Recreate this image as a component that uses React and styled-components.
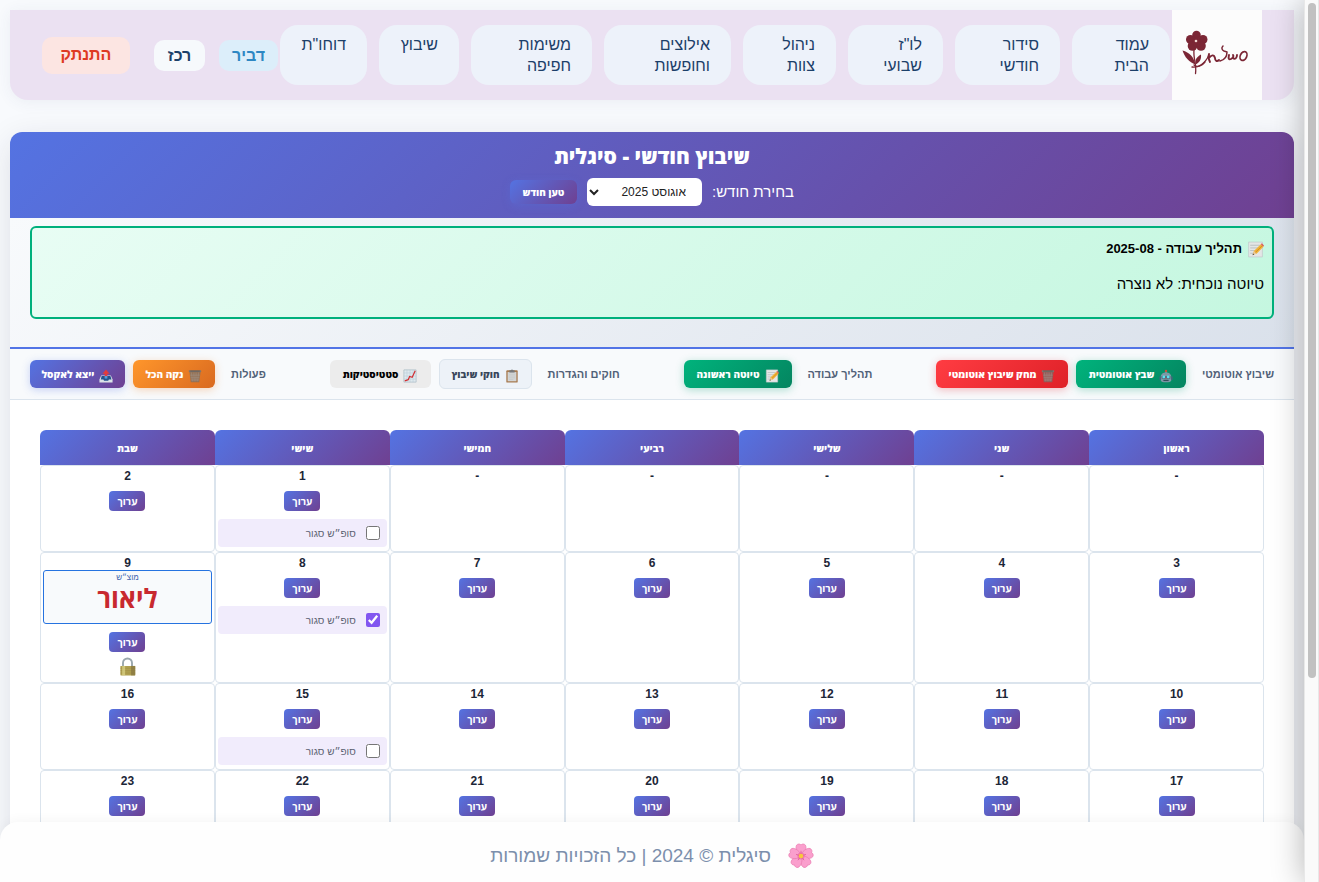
import React from "react";
import styled, { createGlobalStyle, css } from "styled-components";

const brand = "linear-gradient(135deg, #5473e2 0%, #6f4091 100%)";
const line = "#dbe4ed";
const heavyFont = `"Open Sans", "Liberation Sans", Arial, sans-serif`;

const GlobalStyle = createGlobalStyle`
  *, *::before, *::after { box-sizing: border-box; }
  body { margin: 0; background: #f8fafd; font-family: "Liberation Sans", Arial, sans-serif; color: #000; }
  button, select, input { font-family: inherit; margin: 0; }
  h1, h2, p { margin: 0; }
`;

const Shell = styled.div`
  display: flex;
  height: 100vh;
  overflow: hidden;
`;
const Viewport = styled.div`
  position: relative;
  flex: 1;
  min-width: 0;
  overflow: hidden;
  padding: 10px 10px 0;
`;
const ScrollTrack = styled.div`
  width: 15px;
  padding: 3px 3px;
  background: #fafafa;
  border: solid #e8e8e8;
  border-width: 0 1px;
`;
const ScrollThumb = styled.div`
  width: 8px;
  height: 77%;
  border-radius: 4px;
  background: #c1c1c1;
`;
const Drawer = styled.aside`
  position: absolute;
  top: 0;
  left: 100%;
  width: 100px;
  height: 100%;
  box-shadow: 0 0 30px rgba(0, 0, 0, 0.3);
`;

const TopBar = styled.header`
  display: flex;
  align-items: center;
  height: 90px;
  padding: 0 32px;
  margin-bottom: 32px;
  background: #ebe1f2;
  border-radius: 0 0 18px 18px;
  box-shadow: 0 2px 16px rgba(60, 70, 110, 0.07);
`;
const LogoBox = styled.a`
  display: block;
  width: 90px;
  height: 90px;
  background: #fcfcfc;
  margin-left: 2px;
`;
const Nav = styled.nav`
  display: flex;
  gap: 12px;
`;
const NavLink = styled.a`
  width: ${(p) => p.$w}px;
  height: 60px;
  padding: 9px 21px;
  border-radius: 18px;
  background: #edf2fa;
  color: #1c4069;
  font-size: 16px;
  font-weight: 500;
  line-height: 21px;
  text-decoration: none;
`;
const UserArea = styled.div`
  display: flex;
  align-items: center;
  gap: 14px;
  margin-right: 2px;
  flex: 1;
`;
const Chip = styled.span`
  padding: 4px 0;
  width: ${(p) => p.$w}px;
  text-align: center;
  border-radius: 10px;
  font-size: 16px;
  font-weight: 700;
  line-height: 23px;
  background: ${(p) => (p.$name ? "#dceefa" : "#f6f9fc")};
  color: ${(p) => (p.$name ? "#2d87c3" : "#1c4069")};
`;
const Logout = styled.button`
  margin-right: auto;
  width: 88px;
  height: 37px;
  border: 0;
  border-radius: 10px;
  background: #fce5e2;
  color: #de3a23;
  font-size: 16px;
  font-weight: 700;
`;

const Panel = styled.main`
  background: #fff;
  border-radius: 12px;
  box-shadow: 0 8px 32px rgba(30, 30, 60, 0.12);
`;
const PanelHead = styled.div`
  height: 86px;
  padding-top: 8px;
  border-radius: 12px 12px 0 0;
  background: ${brand};
  color: #fff;
  text-align: center;
`;
const Title = styled.h1`
  font-family: ${heavyFont};
  font-size: 21px;
  line-height: 32px;
  font-weight: 800;
`;
const MonthRow = styled.form`
  display: flex;
  justify-content: center;
  align-items: center;
  gap: 10px;
  margin-top: 6px;
`;
const MonthLabel = styled.label`
  font-size: 15px;
  line-height: 20px;
`;
const MonthSelect = styled.select`
  width: 115px;
  height: 28px;
  padding: 0 12px 0 0;
  border: 0;
  border-radius: 6px;
  background: #fff;
  color: #222;
  font-size: 12px;
`;
const LoadButton = styled.button`
  width: 67px;
  height: 24px;
  padding: 0;
  border: 0;
  border-radius: 6px;
  background: ${brand};
  box-shadow: 0 2px 8px rgba(82, 116, 230, 0.3);
  color: #fff;
  font-family: ${heavyFont};
  font-size: 10px;
  font-weight: 800;
`;

const StatusArea = styled.section`
  height: 131px;
  padding: 8px 20px;
  background: linear-gradient(135deg, #f8fafc 0%, #dae1eb 100%);
  border-bottom: 2px solid #5274e6;
`;
const StatusBox = styled.div`
  height: 93px;
  padding: 10px 8px;
  border: 2px solid #00b07c;
  border-radius: 6px;
  background: linear-gradient(135deg, #e8fdf4 0%, #c5f7e0 100%);
`;
const StatusTitle = styled.h2`
  display: flex;
  align-items: center;
  gap: 5px;
  font-size: 13px;
  line-height: 22px;
  font-weight: 700;
`;
const StatusText = styled.p`
  margin-top: 12px;
  font-size: 15px;
  line-height: 24px;
`;

const Toolbar = styled.div`
  display: flex;
  justify-content: space-between;
  align-items: center;
  height: 51px;
  padding: 0 20px;
  background: #f8fafc;
  border-bottom: 1px solid ${line};
`;
const Group = styled.div`
  display: flex;
  align-items: center;
  gap: 8px;
`;
const GroupLabel = styled.span`
  margin-left: 8px;
  color: #516178;
  font-size: 11px;
  font-weight: 700;
`;
const tones = {
  green: css`background: linear-gradient(135deg, #00b37c, #048560); box-shadow: 0 2px 8px rgba(0, 160, 110, 0.3);`,
  red: css`background: linear-gradient(135deg, #ff3c42, #df2128); box-shadow: 0 2px 8px rgba(230, 40, 50, 0.3);`,
  orange: css`background: linear-gradient(135deg, #ff962b, #d96a20); box-shadow: 0 2px 8px rgba(240, 130, 40, 0.3);`,
  brand: css`background: ${brand}; box-shadow: 0 2px 8px rgba(82, 116, 230, 0.3);`,
  outline: css`background: #edf2f8; color: #38465a; border: 1px solid ${line}; height: 30px;`,
  plain: css`background: #ececec; color: #000;`,
};
const ToolButton = styled.button`
  display: flex;
  align-items: center;
  justify-content: center;
  gap: 5px;
  width: ${(p) => p.$w}px;
  height: 28px;
  padding: 0;
  border: 0;
  border-radius: 6px;
  color: #fff;
  font-family: ${heavyFont};
  font-size: 10px;
  font-weight: 800;
  white-space: nowrap;
  svg { margin-top: 4px; flex: none; }
  ${(p) => tones[p.$tone]}
`;

const Calendar = styled.table`
  width: 100%;
  table-layout: fixed;
  border-collapse: separate;
  border-spacing: 0;
`;
const CalendarArea = styled.div`
  padding: 30px;
`;
const DayHead = styled.th`
  height: 35px;
  padding: 0;
  border-radius: 6px 6px 0 0;
  background: ${brand};
  color: #fff;
  font-family: ${heavyFont};
  font-size: 10px;
  font-weight: 800;
`;
const Day = styled.td`
  height: ${(p) => (p.$tall ? 131 : 87)}px;
  padding: 2px;
  vertical-align: top;
  text-align: center;
  border: 1px solid ${line};
  border-radius: 4px;
`;
const DayNumber = styled.div`
  padding-top: 1px;
  color: #1c2637;
  font-size: 12px;
  font-weight: 700;
  line-height: 14px;
`;
const EditButton = styled.button`
  display: block;
  margin: 8px auto 0;
  width: 36px;
  height: 20px;
  padding: 0;
  border: 0;
  border-radius: 4px;
  background: ${brand};
  color: #fff;
  font-family: ${heavyFont};
  font-size: 10px;
  font-weight: 700;
`;
const Weekend = styled.label`
  display: flex;
  align-items: center;
  gap: 10px;
  height: 28px;
  margin-top: 8px;
  padding: 0 7px;
  border-radius: 4px;
  background: #f1ecfc;
  color: #5c6272;
  font-size: 10px;
  input { width: 14px; height: 14px; accent-color: #8256f0; }
`;
const Shift = styled.div`
  height: 54px;
  border: 1px solid #2673e0;
  border-radius: 3px;
  background: #f8fafc;
`;
const ShiftKind = styled.div`
  color: #4263ad;
  font-size: 8px;
  line-height: 13px;
`;
const ShiftName = styled.div`
  color: #c8292f;
  font-family: ${heavyFont};
  font-size: 26px;
  font-weight: 700;
  line-height: 28px;
`;
const LockRow = styled.div`
  display: flex;
  justify-content: center;
  margin-top: 5px;
`;

const Footer = styled.footer`
  position: absolute;
  left: 0;
  right: 0;
  bottom: 0;
  display: flex;
  justify-content: center;
  align-items: center;
  gap: 17px;
  height: 60px;
  padding-top: 8px;
  border-radius: 18px 18px 0 0;
  background: #fefefe;
  box-shadow: 0 -2px 12px rgba(0, 0, 0, 0.04);
  color: #7c8fac;
  font-size: 19px;
`;

function Logo() {
  return (
    <svg width="90" height="90" viewBox="0 0 90 90" role="img" aria-label="סיגלית">
      <g fill="#7b2635">
        <circle cx="24.500" cy="25" r="4.300" />
        <circle cx="18.500" cy="29.500" r="4.500" />
        <circle cx="31" cy="29.500" r="4.500" />
        <circle cx="20.500" cy="36" r="4.800" />
        <circle cx="29" cy="36" r="4.800" />
        <circle cx="24.500" cy="32" r="4.500" />
        <path d="M10.500 40.500c7 2 11 6 13 14C17 52 12.500 47 10.500 40.500z" />
        <path d="M29 44.500c-5 3-6 5-5.500 10 4-2 6-5 5.500-10z" />
      </g>
      <circle cx="24" cy="31" r="1.300" fill="#f1d8d4" />
      <g fill="none" stroke="#7b2635" strokeWidth="1.300" strokeLinecap="round" strokeLinejoin="round">
        <path d="M22 40c-1 8 3 16 1.500 23.500" />
        <path d="M20 57c6 1 13-3 17-12" />
        <path d="M22 55c3 3 8 1 11-3" />
        <path d="M37 44c-1 3 0 6 1 8M37 48c2-3 5-4 6 0 0 3 2 4 4 2" strokeWidth="1.900" />
        <path d="M51 36c-2 2-1 4 1 5l3 1c0 5-3 8-7 9" strokeWidth="1.500" />
        <path d="M57 45c-1 4 0 5 2 4s3-3 2-4M61 48c2 2 4 0 4-3" strokeWidth="1.900" />
        <ellipse cx="71.500" cy="46" rx="3.200" ry="4.600" transform="rotate(25 71.500 46)" strokeWidth="1.700" />
      </g>
    </svg>
  );
}

function Icon({ kind, size = 14 }) {
  const shapes = {
    memo: (
      <>
        <path d="M1.500 1h13v14h-13z" fill="#e4e6e6" stroke="#bfc5c8" strokeWidth=".6" />
        <path d="M3 4h9M3 6.500h8M3 9h5M3 11.500h4" stroke="#b4babd" strokeWidth=".8" />
        <path d="M5.500 13l1-3.500L13 3l2.500 2.500L9 12z" fill="#f0b338" />
        <path d="M7.700 11L14.200 4.500" stroke="#c9801a" strokeWidth=".7" />
        <path d="M13 3l1-1 2 2.200-.8 1.300z" fill="#d9605a" />
        <path d="M5.500 13l1-3.500L9 12z" fill="#e9c79a" />
        <path d="M5.200 13.300l.5-1.500 1 1z" fill="#333" />
      </>
    ),
    trash: (
      <>
        <path d="M1.500 2.500h13l-1.600 12.700H3.100z" fill="#77706a" fillOpacity=".72" />
        <path d="M4 4l1 10M6.700 4l.4 10M9.300 4L9 14M12 4l-1 10M2.500 7h11M3 10h10M3.500 12.500h9" stroke="#a39b93" strokeWidth=".5" />
        <path d="M1 1.500h14v2H1z" fill="#7d756f" />
        <path d="M2.500 2h11v.6h-11z" fill="#4d4844" />
      </>
    ),
    robot: (
      <>
        <path d="M8 2V5" stroke="#b7c1c7" strokeWidth="1" />
        <circle cx="8" cy="2.200" r="1.400" fill="#c9523f" />
        <path d="M2 9c0-6.500 12-6.500 12 0v4c0 3-12 3-12 0z" fill="#7c98a6" />
        <path d="M3 8h10v3H3z" fill="#4b6472" />
        <circle cx="5.500" cy="9" r="1.700" fill="#5ce1ef" />
        <circle cx="10.500" cy="9" r="1.700" fill="#5ce1ef" />
        <path d="M.5 8.500h1.800v4H.5zM13.700 8.500h1.800v4h-1.800z" fill="#43697c" />
        <path d="M5 12.300h6v1.500H5z" fill="#334d5a" />
        <path d="M7.200 11L8 9.800l.8 1.200z" fill="#e05348" />
      </>
    ),
    clipboard: (
      <>
        <rect x="1.500" y="1.500" width="13" height="14" rx="1" fill="#a87b50" />
        <path d="M3 3.500h10v10.500H3z" fill="#d3d5d5" />
        <path d="M4.500 6h7M4.500 8h7M4.500 10h7M4.500 12h5" stroke="#c2c5c6" strokeWidth=".7" />
        <path d="M5 1.500h1.800a1.300 1.300 0 012.400 0H11V4H5z" fill="#77797b" />
      </>
    ),
    chart: (
      <>
        <path d="M1 1h14v14H1z" fill="#dfe9ee" stroke="#a9bac4" strokeWidth=".8" />
        <path d="M4.500 1v14M8 1v14M11.500 1v14M1 4.500h14M1 8h14M1 11.500h14" stroke="#b6cbd6" strokeWidth=".6" />
        <path d="M2 13.500l4-1.300L7.500 8.500l3 1L14 2" fill="none" stroke="#d22f32" strokeWidth="1.400" />
      </>
    ),
    tray: (
      <>
        <path d="M2.500 7.500h11l2 4.500v3.500H.5V12z" fill="#dbe3e8" />
        <path d="M3 8h10l1.300 4h-3l-.8 1.300H5.800L5 12H2z" fill="#23548d" />
        <path d="M6.500 10V5.500H4l4-5 4 5H9.500V10z" fill="#e23b3b" />
        <path d="M6.500 8h3v3h-3z" fill="#4d9ddd" />
      </>
    ),
    lock: (
      <>
        <path d="M4.200 8V5a3.800 3.800 0 017.600 0v3" fill="none" stroke="#9aa7ad" strokeWidth="1.600" />
        <rect x="2" y="7.500" width="12.500" height="8" rx=".5" fill="#b0a050" />
        <path d="M2 9.500h12.500M2 11.500h12.500M2 13.500h12.500" stroke="#9b8a42" strokeWidth=".4" />
        <path d="M11 7.500h3.500v8H11z" fill="#857440" fillOpacity=".7" />
        <path d="M3.500 7.500h2.500v8H3.500z" fill="#ddd58a" fillOpacity=".7" />
      </>
    ),
    flower: (
      <>
        {[0, 72, 144, 216, 288].map((a) => (
          <g key={a} transform={`rotate(${a} 8 8)`}>
            <path
              d="M8 8C5.500 7 4.200 3 5.300 1.300 6 .4 7.400.4 8 1.200 8.600.4 10 .4 10.700 1.300 11.800 3 10.500 7 8 8z"
              fill="#fa9fcd"
              stroke="#e978ae"
              strokeWidth=".4"
            />
            <path d="M8 8V4.800" stroke="#e0609a" strokeWidth=".5" />
          </g>
        ))}
        <circle cx="8" cy="8" r="2.200" fill="#e55a92" fillOpacity=".5" />
        <circle cx="8" cy="8" r="1.400" fill="#f8c83c" />
      </>
    ),
  };
  return (
    <svg width={size} height={size} viewBox="0 0 16 16" aria-hidden="true">
      {shapes[kind]}
    </svg>
  );
}

const links = [
  ["עמוד", "הבית", 98],
  ["סידור", "חודשי", 105],
  ['לו"ז', "שבועי", 95],
  ["ניהול", "צוות", 93],
  ["אילוצים", "וחופשות", 127],
  ["משימות", "חפיפה", 121],
  ["שיבוץ", "", 80],
  ['דוחו"ת', "", 87],
];

const groups = [
  ["שיבוץ אוטומטי", [["robot", "שבץ אוטומטית", "green", 110], ["trash", "מחק שיבוץ אוטומטי", "red", 132]]],
  ["תהליך עבודה", [["memo", "טיוטה ראשונה", "green", 108]]],
  ["חוקים והגדרות", [["clipboard", "חוקי שיבוץ", "outline", 93], ["chart", "סטטיסטיקות", "plain", 101]]],
  ["פעולות", [["trash", "נקה הכל", "orange", 82], ["tray", "ייצא לאקסל", "brand", 95]]],
];

const dayNames = ["ראשון", "שני", "שלישי", "רביעי", "חמישי", "שישי", "שבת"];
const weeks = [
  [null, null, null, null, null, 1, 2],
  [3, 4, 5, 6, 7, 8, 9],
  [10, 11, 12, 13, 14, 15, 16],
  [17, 18, 19, 20, 21, 22, 23],
];
const weekends = { 1: false, 8: true, 15: false, 22: false };
const shifts = { 9: { kind: "מוצ״ש", name: "ליאור" } };

function DayCell({ day, tall }) {
  if (!day) {
    return (
      <Day $tall={tall}>
        <DayNumber>-</DayNumber>
      </Day>
    );
  }
  const shift = shifts[day];
  return (
    <Day $tall={tall}>
      <DayNumber>{day}</DayNumber>
      {shift && (
        <Shift>
          <ShiftKind>{shift.kind}</ShiftKind>
          <ShiftName>{shift.name}</ShiftName>
        </Shift>
      )}
      <EditButton type="button">ערוך</EditButton>
      {shift && (
        <LockRow>
          <Icon kind="lock" size={19} />
        </LockRow>
      )}
      {day in weekends && (
        <Weekend>
          <input type="checkbox" defaultChecked={weekends[day]} />
          סופ״ש סגור
        </Weekend>
      )}
    </Day>
  );
}

export default function App() {
  return (
    <Shell>
      <GlobalStyle />
      <Viewport dir="rtl" lang="he">
        <TopBar>
          <LogoBox href="#home">
            <Logo />
          </LogoBox>
          <Nav>
            {links.map(([a, b, w]) => (
              <NavLink key={a} href="#" $w={w}>
                {a} {b}
              </NavLink>
            ))}
          </Nav>
          <UserArea>
            <Chip $name $w={59}>דביר</Chip>
            <Chip $w={51}>רכז</Chip>
            <Logout type="button">התנתק</Logout>
          </UserArea>
        </TopBar>

        <Panel>
          <PanelHead>
            <Title>שיבוץ חודשי - סיגלית</Title>
            <MonthRow>
              <MonthLabel htmlFor="month">בחירת חודש:</MonthLabel>
              <MonthSelect id="month" defaultValue="2025-08">
                <option value="2025-08">אוגוסט 2025</option>
              </MonthSelect>
              <LoadButton type="button">טען חודש</LoadButton>
            </MonthRow>
          </PanelHead>

          <StatusArea>
            <StatusBox>
              <StatusTitle>
                <Icon kind="memo" size={17} />
                <span>תהליך עבודה - 2025-08</span>
              </StatusTitle>
              <StatusText>טיוטה נוכחית: לא נוצרה</StatusText>
            </StatusBox>
          </StatusArea>

          <Toolbar>
            {groups.map(([label, buttons]) => (
              <Group key={label}>
                <GroupLabel>{label}</GroupLabel>
                {buttons.map(([icon, text, tone, w]) => (
                  <ToolButton key={text} type="button" $tone={tone} $w={w}>
                    <Icon kind={icon} />
                    {text}
                  </ToolButton>
                ))}
              </Group>
            ))}
          </Toolbar>

          <CalendarArea>
            <Calendar>
              <thead>
                <tr>
                  {dayNames.map((d) => (
                    <DayHead key={d} scope="col">{d}</DayHead>
                  ))}
                </tr>
              </thead>
              <tbody>
                {weeks.map((week, i) => (
                  <tr key={i}>
                    {week.map((day, j) => (
                      <DayCell key={j} day={day} tall={i === 1} />
                    ))}
                  </tr>
                ))}
              </tbody>
            </Calendar>
          </CalendarArea>
        </Panel>

        <Footer>
          <Icon kind="flower" size={26} />
          <span>סיגלית © 2024 | כל הזכויות שמורות</span>
        </Footer>
        <Drawer />
      </Viewport>
      <ScrollTrack>
        <ScrollThumb />
      </ScrollTrack>
    </Shell>
  );
}
